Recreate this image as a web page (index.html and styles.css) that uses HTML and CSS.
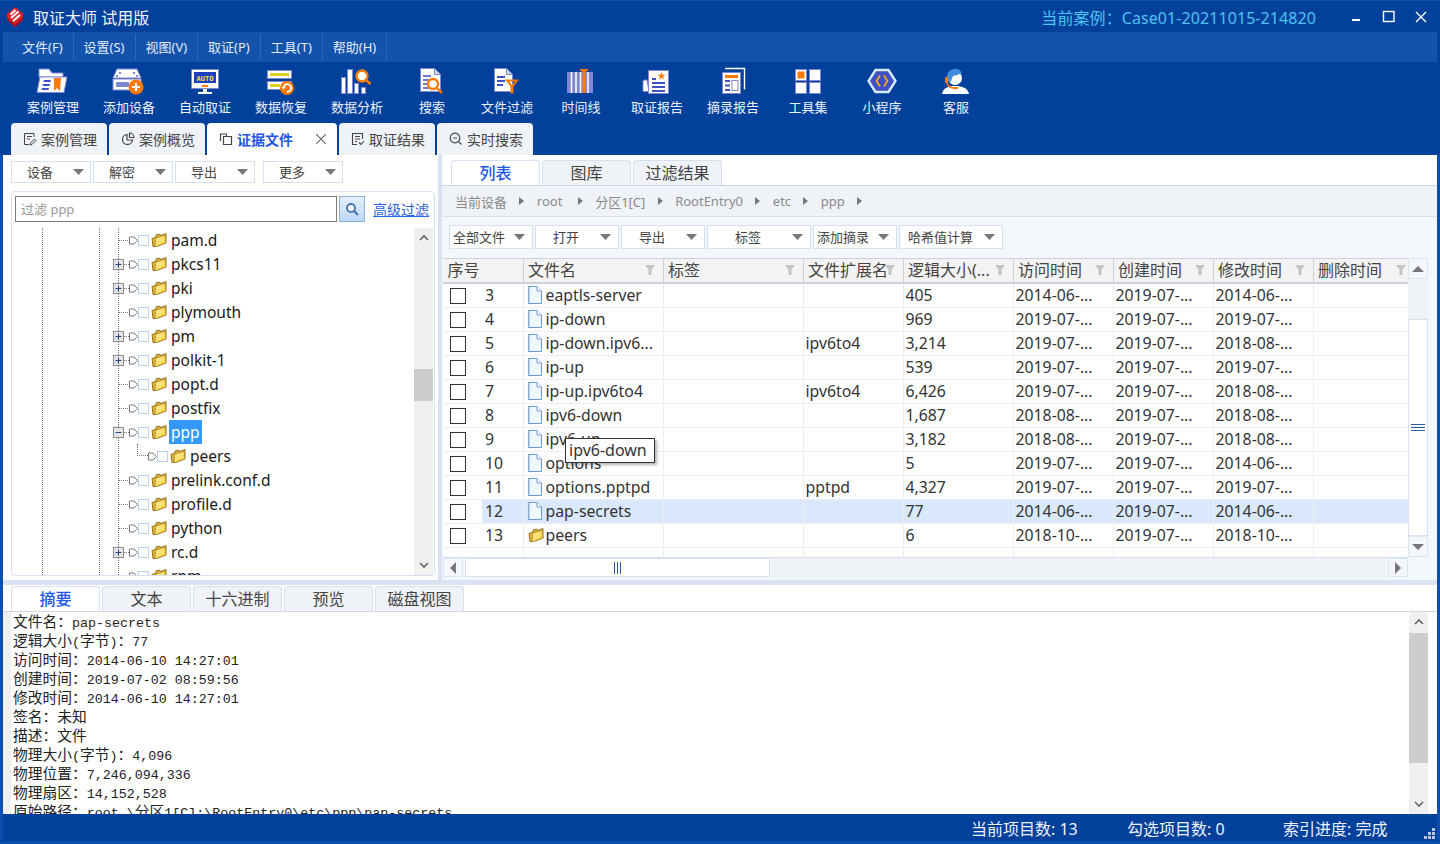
FILE: index.html
```html
<!DOCTYPE html>
<html lang="zh-CN">
<head>
<meta charset="utf-8">
<title>取证大师 试用版</title>
<link rel="stylesheet" href="styles.css">
</head>
<body>
<svg class="defs" width="0" height="0" aria-hidden="true">
  <defs>
    <linearGradient id="fold" x1="0" y1="0" x2="1" y2="1">
      <stop offset="0" stop-color="#fff3a0"/>
      <stop offset="1" stop-color="#f4cf3e"/>
    </linearGradient>
    <symbol id="folder" viewBox="0 0 16 16">
      <path d="M1 6.500l1 8h3.500l9.500-3.500V1.500l-5.500 2-1-1.500-3.500 1v2z" fill="#d9b24a" stroke="#9c7418"/>
      <path d="M4.500 6.500l9.500-3.500.8 7.800-9.300 3.700H4z" fill="url(#fold)" stroke="#b58a22" stroke-width=".8"/>
    </symbol>
    <symbol id="doc" viewBox="0 0 14 18">
      <path d="M.5.500h8.500l4.500 4.500v12.500H.5z" fill="#f1f7fe" stroke="#6f9ccf"/>
      <path d="M9 .5v4.500h4.500" fill="#fff" stroke="#6f9ccf"/>
      <path d="M1 1v16" stroke="#9ab8dc"/>
    </symbol>
    <symbol id="tag" viewBox="0 0 9 9">
      <path d="M.5 1h4.500l3.500 3.500-3.500 3.500h-4.500z" fill="#fff" stroke="#777"/>
    </symbol>
    <symbol id="funnel" viewBox="0 0 10 10">
      <path d="M0 0h10l-3.500 4.500v5.500h-3v-5.500z" fill="#c4c4c4"/>
    </symbol>
    <symbol id="caret" viewBox="0 0 11 6">
      <path d="M0 0h11l-5.500 6z" fill="#777"/>
    </symbol>
    <symbol id="plus" viewBox="0 0 11 11">
      <rect x=".5" y=".5" width="10" height="10" fill="#e4e4e4" stroke="#8a8a8a"/>
      <path d="M2.500 5.500h6M5.500 2.500v6" stroke="#23468f" fill="none"/>
    </symbol>
    <symbol id="minus" viewBox="0 0 11 11">
      <rect x=".5" y=".5" width="10" height="10" fill="#e4e4e4" stroke="#8a8a8a"/>
      <path d="M2.500 5.500h6" stroke="#23468f" fill="none"/>
    </symbol>
    <symbol id="chev-up" viewBox="0 0 10 6">
      <path d="M1 5l4-4 4 4" fill="none" stroke="#606060" stroke-width="1.600"/>
    </symbol>
    <symbol id="chev-down" viewBox="0 0 10 6">
      <path d="M1 1l4 4 4-4" fill="none" stroke="#606060" stroke-width="1.600"/>
    </symbol>
  </defs>
</svg>

<div class="app">
  <header class="chrome">
    <div class="titlebar">
      <svg class="logo" width="20" height="20" viewBox="0 0 20 20">
        <path d="M10 0l8 7v6l-8 7-8-7V7z" fill="#e0222d"/>
        <path d="M2 13l8 7 8-7v-3l-8 7-8-7z" fill="#a8141f"/>
        <path d="M5.500 7.500l5-4.500M6 11l7.500-6.500M8 14l7-6" stroke="#fff" stroke-width="2" fill="none"/>
      </svg>
      <span class="app-name">取证大师 试用版</span>
      <span class="case-name">当前案例：Case01-20211015-214820</span>
      <div class="win-buttons">
        <svg width="32" height="14" viewBox="0 0 32 14"><rect x="11" y="9" width="8" height="2" fill="#fff"/></svg>
        <svg width="32" height="14" viewBox="0 0 32 14"><rect x="10.500" y="1.500" width="10.500" height="10" fill="none" stroke="#fff" stroke-width="1.400"/></svg>
        <svg width="32" height="14" viewBox="0 0 32 14"><path d="M11 2l10 10M21 2l-10 10" stroke="#fff" stroke-width="1.400"/></svg>
      </div>
    </div>
    <nav class="menubar">
      <span class="menu-item">文件(F)</span>
      <span class="menu-item">设置(S)</span>
      <span class="menu-item">视图(V)</span>
      <span class="menu-item">取证(P)</span>
      <span class="menu-item">工具(T)</span>
      <span class="menu-item">帮助(H)</span>
    </nav>
    <div class="toolbar">
      <div class="tool">
        <svg width="36" height="28" viewBox="0 0 36 28">
          <path d="M4 2h10l3 4h11v4H4z" fill="#fff" stroke="#8088d0"/>
          <path d="M5 10h27l-3 15.500H2z" fill="#fff" stroke="#8088d0"/>
          <path d="M9 13h7l-.5 2h-7zM8 17h7l-.5 2h-7zM7 21h7l-.5 2h-7z" fill="#3f4fc4"/>
          <path d="M19 11h7l-1 13-3-3-3 3z" fill="#ff7a00"/>
        </svg>
        <span>案例管理</span>
      </div>
      <div class="tool">
        <svg width="36" height="28" viewBox="0 0 36 28">
          <path d="M6 2h20l4 9H2z" fill="#fff" stroke="#8088d0"/>
          <circle cx="9" cy="6" r="1" fill="#5a66c8"/><circle cx="23" cy="6" r="1" fill="#5a66c8"/>
          <circle cx="6" cy="9" r="1" fill="#5a66c8"/><circle cx="26" cy="9" r="1" fill="#5a66c8"/>
          <rect x="2" y="12" width="28" height="11" fill="#fff" stroke="#8088d0"/>
          <rect x="5" y="15" width="13" height="5" rx="1" fill="#7d86d2"/>
          <circle cx="25" cy="20" r="7.500" fill="#ff7a00"/>
          <path d="M25 16v8M21 20h8" stroke="#fff" stroke-width="2"/>
        </svg>
        <span>添加设备</span>
      </div>
      <div class="tool">
        <svg width="36" height="28" viewBox="0 0 36 28">
          <rect x="4.500" y="2.500" width="27" height="19" fill="#fff" stroke="#8088d0"/>
          <rect x="7" y="5" width="22" height="11" fill="#1d3fc4"/>
          <text class="auto-text" x="18" y="13.500">AUTO</text>
          <rect x="15" y="18" width="6" height="2" fill="#ff7a00"/>
          <rect x="16" y="22" width="4" height="3" fill="#fff"/>
          <rect x="11" y="25" width="14" height="2" fill="#fff"/>
        </svg>
        <span>自动取证</span>
      </div>
      <div class="tool">
        <svg width="36" height="28" viewBox="0 0 36 28">
          <rect x="4.500" y="3.500" width="24" height="8" fill="#fff" stroke="#8088d0"/>
          <rect x="7" y="6" width="19" height="3" fill="#e2cf23"/>
          <rect x="4.500" y="14.500" width="24" height="8" fill="#fff" stroke="#8088d0"/>
          <rect x="7" y="17" width="10" height="3" fill="#e2cf23"/>
          <circle cx="24" cy="21" r="7" fill="#ff7a00"/>
          <path d="M20.500 21a3.800 3.800 0 1 1 3.500 3.800" fill="none" stroke="#fff" stroke-width="1.800"/>
          <path d="M18.500 20h4l-2 2.500z" fill="#fff"/>
        </svg>
        <span>数据恢复</span>
      </div>
      <div class="tool">
        <svg width="36" height="28" viewBox="0 0 36 28">
          <rect x="2.500" y="10.500" width="4" height="16" fill="#fff" stroke="#8088d0"/>
          <rect x="8.500" y="2.500" width="5" height="24" fill="#fff" stroke="#8088d0"/>
          <rect x="15.500" y="16.500" width="4" height="10" fill="#fff" stroke="#8088d0"/>
          <rect x="22.500" y="20.500" width="4" height="6" fill="#fff" stroke="#8088d0"/>
          <circle cx="23" cy="9" r="5.500" fill="#fff" stroke="#ff7a00" stroke-width="2.400"/>
          <path d="M27 13l4.500 4" stroke="#ff7a00" stroke-width="2.400"/>
        </svg>
        <span>数据分析</span>
      </div>
      <div class="tool tool-m1">
        <svg width="36" height="28" viewBox="0 0 36 28">
          <path d="M6.500 1.500h14l6 6v17h-20z" fill="#fff" stroke="#8088d0"/>
          <path d="M20.500 1.500v6h6" fill="#cfd3ef" stroke="#8088d0"/>
          <path d="M9 9h8M9 13h6M9 17h4M9 21h6" stroke="#3f4fc4" stroke-width="1.600"/>
          <circle cx="19" cy="17" r="5" fill="#fff" stroke="#ff7a00" stroke-width="2.400"/>
          <path d="M23 21l5 5" stroke="#ff7a00" stroke-width="2.400"/>
        </svg>
        <span>搜索</span>
      </div>
      <div class="tool tool-m1">
        <svg width="36" height="28" viewBox="0 0 36 28">
          <path d="M5.500 1.500h12l6 6v17h-18z" fill="#fff" stroke="#8088d0"/>
          <path d="M17.500 1.500v6h6" fill="#cfd3ef" stroke="#8088d0"/>
          <path d="M8 10h8M8 14h8M8 18h6" stroke="#3f4fc4" stroke-width="1.800"/>
          <path d="M16 12.500h14l-5.500 7v7h-3v-7zM20 14.500l3 3.500 3-3.500z" fill="#ff7a00" fill-rule="evenodd"/>
        </svg>
        <span>文件过滤</span>
      </div>
      <div class="tool tool-m2">
        <svg width="36" height="28" viewBox="0 0 36 28">
          <rect x="4" y="5" width="26" height="21" fill="#8088d0"/>
          <path d="M8.500 5v21M13 5v21M17.500 5v21M25 5v21" stroke="#fff" stroke-width="1.500"/>
          <rect x="19.500" y="7" width="3" height="19" fill="#ff7a00"/>
          <path d="M16 2h10l-5 5z" fill="#ff7a00"/>
        </svg>
        <span>时间线</span>
      </div>
      <div class="tool">
        <svg width="36" height="28" viewBox="0 0 36 28">
          <path d="M8 13H5.500a1.500 1.500 0 0 0-1.500 1.500v10h6z" fill="#fff" stroke="#8088d0"/>
          <rect x="9.500" y="3.500" width="20" height="23" fill="#fff" stroke="#8088d0"/>
          <path d="M22.500 5l1 2.800h3l-2.400 1.800 1 3-2.600-1.800-2.500 1.800 1-3-2.400-1.800h3z" fill="#ff7a00"/>
          <path d="M13 12h4M13 16h13M13 20h13M13 24h13" stroke="#3f4fc4" stroke-width="1.800"/>
        </svg>
        <span>取证报告</span>
      </div>
      <div class="tool">
        <svg width="36" height="28" viewBox="0 0 36 28">
          <path d="M10 1.500h19.500v21" fill="none" stroke="#fff" stroke-width="1.400"/>
          <rect x="7.500" y="5.500" width="18" height="21" fill="#fff" stroke="#8088d0"/>
          <rect x="10" y="8" width="13" height="3" fill="#ff7a00"/>
          <path d="M10 14h5M10 18.500h5M10 23h5" stroke="#3f4fc4" stroke-width="1.800"/>
          <rect x="17" y="13.500" width="6" height="10" fill="#fff" stroke="#8088d0"/>
        </svg>
        <span>摘录报告</span>
      </div>
      <div class="tool tool-m1">
        <svg width="36" height="28" viewBox="0 0 36 28">
          <rect x="5.500" y="2.500" width="11" height="11" fill="#fff" stroke="#8088d0"/>
          <rect x="7.500" y="4.500" width="7" height="7" fill="#ff7a00"/>
          <rect x="19.500" y="2.500" width="11" height="11" fill="#fff" stroke="#8088d0"/>
          <rect x="5.500" y="15.500" width="11" height="11" fill="#fff" stroke="#8088d0"/>
          <rect x="19.500" y="15.500" width="11" height="11" fill="#fff" stroke="#8088d0"/>
        </svg>
        <span>工具集</span>
      </div>
      <div class="tool tool-m2">
        <svg width="36" height="28" viewBox="0 0 36 28">
          <path d="M11.500 3h13l7 11-7 11h-13l-7-11z" fill="#3f4fc4" stroke="#d5ecff" stroke-width="2.400"/>
          <path d="M16 8.500l-3.500 5.500 3.500 5.500M20 8.500l3.500 5.500-3.500 5.500" fill="none" stroke="#f2a51e" stroke-width="1.800"/>
        </svg>
        <span>小程序</span>
      </div>
      <div class="tool tool-m2">
        <svg width="36" height="28" viewBox="0 0 36 28">
          <path d="M4 27c1-6 6-8 13-8s13 2 14 8z" fill="#fff"/>
          <circle cx="17" cy="11" r="7" fill="#fff"/>
          <path d="M9 10a8 8 0 0 1 15-4l-5 2-4 1-2 5-1 2z" fill="#3f8fe0"/>
          <rect x="7" y="10" width="3" height="6" rx="1" fill="#ff7a00"/>
          <path d="M9 16c1 4 4 5 8 5" fill="none" stroke="#ff7a00" stroke-width="1.400"/>
          <rect x="15" y="20" width="5" height="2" fill="#ff7a00"/>
        </svg>
        <span>客服</span>
      </div>
    </div>
    <div class="tabs">
      <div class="tab">
        <svg class="tab-icon" width="14" height="14" viewBox="0 0 14 14"><path d="M11 5V1.500H1.500v11H6M4 4.500h5M4 7h3M9 12.500l-2 .5.500-2 4-4 1.500 1.500z" fill="none" stroke="#444"/></svg>
        <span>案例管理</span>
      </div>
      <div class="tab">
        <svg class="tab-icon" width="14" height="14" viewBox="0 0 14 14"><path d="M6 2.500a5 5 0 1 0 5.500 5.500H6zM8.500 1a4.500 4.500 0 0 1 4.500 4.500H8.500z" fill="none" stroke="#444" stroke-width="1.200"/></svg>
        <span>案例概览</span>
      </div>
      <div class="tab tab-active">
        <svg class="tab-icon" width="14" height="14" viewBox="0 0 14 14"><path d="M1.500 9V2h6v2M4.500 12.500v-8h8v8z" fill="none" stroke="#444" stroke-width="1.200"/></svg>
        <span>证据文件</span>
        <svg class="tab-close" width="10" height="10" viewBox="0 0 10 10"><path d="M0 0l10 10M10 0L0 10" stroke="#666" stroke-width="1.100"/></svg>
      </div>
      <div class="tab">
        <svg class="tab-icon" width="14" height="14" viewBox="0 0 14 14"><path d="M11.500 7V1.500h-10v11H6M4 4.500h5M4 7h5M4 9.500h2M8 10.500l2 2 3-3.500" fill="none" stroke="#444" stroke-width="1.100"/></svg>
        <span>取证结果</span>
      </div>
      <div class="tab">
        <svg class="tab-icon" width="14" height="14" viewBox="0 0 14 14"><circle cx="6" cy="6" r="4.800" fill="none" stroke="#444" stroke-width="1.200"/><path d="M4 6h4M9.500 9.500l3 3" stroke="#444" stroke-width="1.200"/></svg>
        <span>实时搜索</span>
      </div>
    </div>
  </header>

  <main class="workspace">
    <section class="left-pane">
      <div class="btn-row">
        <div class="drop drop-left"><span>设备</span><svg width="11" height="6"><use href="#caret"/></svg></div>
        <div class="drop drop-left"><span>解密</span><svg width="11" height="6"><use href="#caret"/></svg></div>
        <div class="drop drop-left"><span>导出</span><svg width="11" height="6"><use href="#caret"/></svg></div>
        <div class="drop drop-left drop-gap"><span>更多</span><svg width="11" height="6"><use href="#caret"/></svg></div>
      </div>
      <div class="tree-panel">
        <div class="filter-row">
          <div class="filter-input"><span>过滤 ppp</span></div>
          <div class="filter-btn">
            <svg width="14" height="14" viewBox="0 0 14 14"><circle cx="6" cy="6" r="4" fill="#fff" stroke="#4a78b0" stroke-width="2"/><path d="M9 9l4 4" stroke="#4a78b0" stroke-width="2.400"/></svg>
          </div>
          <a class="filter-link">高级过滤</a>
        </div>
        <div class="tree-body">
          <i class="guide guide-a"></i><i class="guide guide-b"></i><i class="guide guide-c"></i>
          <div class="tree-rows">
            <div class="node"><span class="exp"></span><i class="dots"></i><svg class="ico-tag" width="9" height="9"><use href="#tag"/></svg><i class="cb"></i><svg width="16" height="16"><use href="#folder"/></svg><span class="label">pam.d</span></div>
            <div class="node"><svg class="exp" width="11" height="11"><use href="#plus"/></svg><i class="dots"></i><svg class="ico-tag" width="9" height="9"><use href="#tag"/></svg><i class="cb"></i><svg width="16" height="16"><use href="#folder"/></svg><span class="label">pkcs11</span></div>
            <div class="node"><svg class="exp" width="11" height="11"><use href="#plus"/></svg><i class="dots"></i><svg class="ico-tag" width="9" height="9"><use href="#tag"/></svg><i class="cb"></i><svg width="16" height="16"><use href="#folder"/></svg><span class="label">pki</span></div>
            <div class="node"><span class="exp"></span><i class="dots"></i><svg class="ico-tag" width="9" height="9"><use href="#tag"/></svg><i class="cb"></i><svg width="16" height="16"><use href="#folder"/></svg><span class="label">plymouth</span></div>
            <div class="node"><svg class="exp" width="11" height="11"><use href="#plus"/></svg><i class="dots"></i><svg class="ico-tag" width="9" height="9"><use href="#tag"/></svg><i class="cb"></i><svg width="16" height="16"><use href="#folder"/></svg><span class="label">pm</span></div>
            <div class="node"><svg class="exp" width="11" height="11"><use href="#plus"/></svg><i class="dots"></i><svg class="ico-tag" width="9" height="9"><use href="#tag"/></svg><i class="cb"></i><svg width="16" height="16"><use href="#folder"/></svg><span class="label">polkit-1</span></div>
            <div class="node"><span class="exp"></span><i class="dots"></i><svg class="ico-tag" width="9" height="9"><use href="#tag"/></svg><i class="cb"></i><svg width="16" height="16"><use href="#folder"/></svg><span class="label">popt.d</span></div>
            <div class="node"><span class="exp"></span><i class="dots"></i><svg class="ico-tag" width="9" height="9"><use href="#tag"/></svg><i class="cb"></i><svg width="16" height="16"><use href="#folder"/></svg><span class="label">postfix</span></div>
            <div class="node"><svg class="exp" width="11" height="11"><use href="#minus"/></svg><i class="dots"></i><svg class="ico-tag" width="9" height="9"><use href="#tag"/></svg><i class="cb"></i><svg width="16" height="16"><use href="#folder"/></svg><span class="label label-selected">ppp</span></div>
            <div class="node node-child"><i class="elbow"></i><svg class="ico-tag" width="9" height="9"><use href="#tag"/></svg><i class="cb"></i><svg width="16" height="16"><use href="#folder"/></svg><span class="label">peers</span></div>
            <div class="node"><span class="exp"></span><i class="dots"></i><svg class="ico-tag" width="9" height="9"><use href="#tag"/></svg><i class="cb"></i><svg width="16" height="16"><use href="#folder"/></svg><span class="label">prelink.conf.d</span></div>
            <div class="node"><span class="exp"></span><i class="dots"></i><svg class="ico-tag" width="9" height="9"><use href="#tag"/></svg><i class="cb"></i><svg width="16" height="16"><use href="#folder"/></svg><span class="label">profile.d</span></div>
            <div class="node"><span class="exp"></span><i class="dots"></i><svg class="ico-tag" width="9" height="9"><use href="#tag"/></svg><i class="cb"></i><svg width="16" height="16"><use href="#folder"/></svg><span class="label">python</span></div>
            <div class="node"><svg class="exp" width="11" height="11"><use href="#plus"/></svg><i class="dots"></i><svg class="ico-tag" width="9" height="9"><use href="#tag"/></svg><i class="cb"></i><svg width="16" height="16"><use href="#folder"/></svg><span class="label">rc.d</span></div>
            <div class="node"><span class="exp"></span><i class="dots"></i><svg class="ico-tag" width="9" height="9"><use href="#tag"/></svg><i class="cb"></i><svg width="16" height="16"><use href="#folder"/></svg><span class="label">rpm</span></div>
          </div>
          <div class="sb sb-tree">
            <div class="sb-end"><svg width="10" height="6"><use href="#chev-up"/></svg></div>
            <div class="sb-track">
              <div class="sb-space sb-space-tree"></div>
              <div class="sb-thumb sb-thumb-tree"></div>
            </div>
            <div class="sb-end"><svg width="10" height="6"><use href="#chev-down"/></svg></div>
          </div>
        </div>
      </div>
    </section>
    <div class="v-split"></div>
    <section class="right-pane">
      <div class="subtabs">
        <div class="subtab subtab-active"><span>列表</span></div>
        <div class="subtab"><span>图库</span></div>
        <div class="subtab"><span>过滤结果</span></div>
      </div>
      <div class="crumbs">
        <span>当前设备</span><i class="tri"></i>
        <span class="crumb-root">root</span><i class="tri"></i>
        <span>分区1[C]</span><i class="tri"></i>
        <span>RootEntry0</span><i class="tri"></i>
        <span>etc</span><i class="tri"></i>
        <span>ppp</span><i class="tri"></i>
      </div>
      <div class="list-area">
        <div class="list-tools">
          <div class="drop drop-w84 drop-tight"><span>全部文件</span><svg width="11" height="6"><use href="#caret"/></svg></div>
          <div class="drop drop-w84"><span>打开</span><svg width="11" height="6"><use href="#caret"/></svg></div>
          <div class="drop drop-w84"><span>导出</span><svg width="11" height="6"><use href="#caret"/></svg></div>
          <div class="drop drop-w104"><span>标签</span><svg width="11" height="6"><use href="#caret"/></svg></div>
          <div class="drop drop-w84 drop-tight"><span>添加摘录</span><svg width="11" height="6"><use href="#caret"/></svg></div>
          <div class="drop drop-w104 drop-tight2"><span>哈希值计算</span><svg width="11" height="6"><use href="#caret"/></svg></div>
        </div>
        <div class="grid-wrap">
          <div class="grid-main">
            <div class="table-box">
              <table class="files">
                <colgroup>
                  <col class="c-seq"><col class="c-name"><col class="c-tag"><col class="c-ext"><col class="c-size"><col class="c-time"><col class="c-time"><col class="c-time"><col class="c-del">
                </colgroup>
                <thead>
                  <tr>
                    <th>序号</th>
                    <th>文件名<svg class="th-f" width="10" height="10"><use href="#funnel"/></svg></th>
                    <th>标签<svg class="th-f" width="10" height="10"><use href="#funnel"/></svg></th>
                    <th>文件扩展名<svg class="th-f" width="10" height="10"><use href="#funnel"/></svg></th>
                    <th>逻辑大小(...<svg class="th-f" width="10" height="10"><use href="#funnel"/></svg></th>
                    <th>访问时间<svg class="th-f" width="10" height="10"><use href="#funnel"/></svg></th>
                    <th>创建时间<svg class="th-f" width="10" height="10"><use href="#funnel"/></svg></th>
                    <th>修改时间<svg class="th-f" width="10" height="10"><use href="#funnel"/></svg></th>
                    <th>删除时间<svg class="th-f th-f-last" width="10" height="10"><use href="#funnel"/></svg></th>
                  </tr>
                </thead>
                <tbody>
                  <tr><td class="seq"><i class="check"></i><span class="num">3</span></td><td><div class="fname"><svg width="14" height="18"><use href="#doc"/></svg>eaptls-server</div></td><td></td><td></td><td>405</td><td>2014-06-...</td><td>2019-07-...</td><td>2014-06-...</td><td></td></tr>
                  <tr><td class="seq"><i class="check"></i><span class="num">4</span></td><td><div class="fname"><svg width="14" height="18"><use href="#doc"/></svg>ip-down</div></td><td></td><td></td><td>969</td><td>2019-07-...</td><td>2019-07-...</td><td>2019-07-...</td><td></td></tr>
                  <tr><td class="seq"><i class="check"></i><span class="num">5</span></td><td><div class="fname"><svg width="14" height="18"><use href="#doc"/></svg>ip-down.ipv6...</div></td><td></td><td>ipv6to4</td><td>3,214</td><td>2019-07-...</td><td>2019-07-...</td><td>2018-08-...</td><td></td></tr>
                  <tr><td class="seq"><i class="check"></i><span class="num">6</span></td><td><div class="fname"><svg width="14" height="18"><use href="#doc"/></svg>ip-up</div></td><td></td><td></td><td>539</td><td>2019-07-...</td><td>2019-07-...</td><td>2019-07-...</td><td></td></tr>
                  <tr><td class="seq"><i class="check"></i><span class="num">7</span></td><td><div class="fname"><svg width="14" height="18"><use href="#doc"/></svg>ip-up.ipv6to4</div></td><td></td><td>ipv6to4</td><td>6,426</td><td>2019-07-...</td><td>2019-07-...</td><td>2018-08-...</td><td></td></tr>
                  <tr><td class="seq"><i class="check"></i><span class="num">8</span></td><td><div class="fname"><svg width="14" height="18"><use href="#doc"/></svg>ipv6-down</div></td><td></td><td></td><td>1,687</td><td>2018-08-...</td><td>2019-07-...</td><td>2018-08-...</td><td></td></tr>
                  <tr><td class="seq"><i class="check"></i><span class="num">9</span></td><td><div class="fname"><svg width="14" height="18"><use href="#doc"/></svg>ipv6-up</div></td><td></td><td></td><td>3,182</td><td>2018-08-...</td><td>2019-07-...</td><td>2018-08-...</td><td></td></tr>
                  <tr><td class="seq"><i class="check"></i><span class="num">10</span></td><td><div class="fname"><svg width="14" height="18"><use href="#doc"/></svg>options</div></td><td></td><td></td><td>5</td><td>2019-07-...</td><td>2019-07-...</td><td>2014-06-...</td><td></td></tr>
                  <tr><td class="seq"><i class="check"></i><span class="num">11</span></td><td><div class="fname"><svg width="14" height="18"><use href="#doc"/></svg>options.pptpd</div></td><td></td><td>pptpd</td><td>4,327</td><td>2019-07-...</td><td>2019-07-...</td><td>2019-07-...</td><td></td></tr>
                  <tr class="row-selected"><td class="seq"><i class="check"></i><span class="num">12</span></td><td><div class="fname"><svg width="14" height="18"><use href="#doc"/></svg>pap-secrets</div></td><td></td><td></td><td>77</td><td>2014-06-...</td><td>2019-07-...</td><td>2014-06-...</td><td></td></tr>
                  <tr><td class="seq"><i class="check"></i><span class="num">13</span></td><td><div class="fname"><svg class="fname-folder" width="16" height="16"><use href="#folder"/></svg>peers</div></td><td></td><td></td><td>6</td><td>2018-10-...</td><td>2019-07-...</td><td>2018-10-...</td><td></td></tr>
                  <tr class="row-empty"><td></td><td></td><td></td><td></td><td></td><td></td><td></td><td></td><td></td></tr>
                </tbody>
              </table>
              <div class="tooltip">ipv6-down</div>
            </div>
            <div class="hscroll">
              <div class="hs-btn"><i class="tri-left"></i></div>
              <div class="hs-thumb"><i class="grip-v"></i></div>
              <div class="hs-track"></div>
              <div class="hs-btn"><i class="tri-right"></i></div>
            </div>
          </div>
          <div class="vscroll">
            <div class="vs-btn"><i class="tri-up"></i></div>
            <div class="vs-track"></div>
            <div class="vs-thumb"><i class="grip-h"></i></div>
            <div class="vs-btn"><i class="tri-down"></i></div>
          </div>
        </div>
      </div>
    </section>
  </main>

  <div class="h-split"></div>

  <section class="detail">
    <div class="detail-tabs">
      <div class="subtab subtab-active detail-tab"><span>摘要</span></div>
      <div class="subtab detail-tab"><span>文本</span></div>
      <div class="subtab detail-tab"><span>十六进制</span></div>
      <div class="subtab detail-tab"><span>预览</span></div>
      <div class="subtab detail-tab"><span>磁盘视图</span></div>
    </div>
    <div class="detail-body">
      <div class="detail-gutter"></div>
      <div class="detail-text">
        <div><b>文件名：</b>pap-secrets</div>
        <div><b>逻辑大小</b>(<b>字节</b>)<b>：</b>77</div>
        <div><b>访问时间：</b>2014-06-10 14:27:01</div>
        <div><b>创建时间：</b>2019-07-02 08:59:56</div>
        <div><b>修改时间：</b>2014-06-10 14:27:01</div>
        <div><b>签名：未知</b></div>
        <div><b>描述：文件</b></div>
        <div><b>物理大小</b>(<b>字节</b>)<b>：</b>4,096</div>
        <div><b>物理位置：</b>7,246,094,336</div>
        <div><b>物理扇区：</b>14,152,528</div>
        <div><b>原始路径：</b>root.\<b>分区</b>1[C]:\RootEntry0\etc\ppp\pap-secrets</div>
      </div>
      <div class="sb sb-detail">
        <div class="sb-end"><svg width="10" height="6"><use href="#chev-up"/></svg></div>
        <div class="sb-track">
          <div class="sb-thumb sb-thumb-detail"></div>
        </div>
        <div class="sb-end"><svg width="10" height="6"><use href="#chev-down"/></svg></div>
      </div>
    </div>
  </section>

  <footer class="status">
    <span class="stat">当前项目数: 13</span>
    <span class="stat">勾选项目数: 0</span>
    <span class="stat stat-last">索引进度: 完成</span>
    <svg class="size-grip" width="11" height="11" viewBox="0 0 11 11"><path d="M8 0h3v3H8zM4 4h3v3H4zM8 4h3v3H8zM0 8h3v3H0zM4 8h3v3H4zM8 8h3v3H8z" fill="#b9c6e2"/></svg>
  </footer>
</div>
</body>
</html>
```

FILE: styles.css
```css
* { box-sizing: border-box; }
html, body { margin: 0; padding: 0; }
body {
  width: 1440px;
  height: 844px;
  overflow: hidden;
  font-family: "Noto Sans", "Noto Sans CJK SC", sans-serif;
  color: #333;
  background: #0c4eae;
}
.defs { position: absolute; }
.app {
  width: 1440px;
  height: 844px;
  display: flex;
  flex-direction: column;
  background: #0c4eae;
  overflow: hidden;
}
.chrome {
  background: #01409b;
  border-top: 1px solid #0c4eae;
  flex: none;
}
.titlebar {
  height: 31px;
  display: flex;
  align-items: center;
  color: #fff;
  padding-left: 5px;
}
.logo { flex: none; margin-right: 8px; }
.app-name { font-size: 16px; color: #f0f4fb; }
.case-name {
  font-size: 16px;
  letter-spacing: .08px;
  color: #4fc3f2;
  margin-left: auto;
  margin-right: 25px;
}
.win-buttons { display: flex; margin-right: 3px; margin-top: 1px; }
.win-buttons svg { display: block; }
.menubar {
  height: 30px;
  margin: 0 3px;
  padding: 2px 0 2px 9px;
  background: #1353ac;
  display: flex;
  align-items: stretch;
}
.menu-item {
  font-size: 13px;
  color: #e4ebf8;
  padding: 0 10px 2px;
  display: flex;
  align-items: center;
  border-right: 1px solid #2e68b9;
}
.toolbar {
  height: 61px;
  padding-left: 15px;
  display: flex;
}
.tool {
  width: 76px;
  flex: none;
  display: flex;
  flex-direction: column;
  align-items: center;
  padding-top: 5px;
  font-size: 13px;
  color: #eef3fb;
  white-space: nowrap;
}
.tool-m1 { margin-left: -1px; }
.tool-m2 { margin-left: -2px; }
.tool svg { display: block; margin-bottom: 3px; }
.tool span { line-height: 18px; }
.auto-text {
  font-family: "DejaVu Sans Mono", monospace;
  font-size: 7px;
  font-weight: 700;
  fill: #ffe22a;
  text-anchor: middle;
}
.tabs {
  height: 32px;
  padding-left: 11px;
  display: flex;
  gap: 2px;
}
.tab {
  width: 96px;
  background: #eff2f7;
  border-radius: 4px 4px 0 0;
  display: flex;
  align-items: center;
  padding-left: 12px;
  font-size: 14px;
  color: #444;
}
.tab-icon { margin-right: 4px; flex: none; }
.tab-active {
  width: 130px;
  background: #fff;
  color: #2357e8;
  font-weight: 700;
  padding-left: 12px;
  border-radius: 4px 4px 0 0;
}
.tab-close { margin-left: 23px; }

.workspace {
  height: 425px;
  flex: none;
  margin: 0 3px;
  display: flex;
  background: #fff;
}
.left-pane {
  width: 435px;
  flex: none;
  padding: 6px 3px 4px 8px;
  display: flex;
  flex-direction: column;
}
.btn-row { display: flex; gap: 2px; margin-bottom: 8px; }
.drop {
  height: 22px;
  border: 1px solid #d7e0f0;
  background: #fff;
  display: flex;
  align-items: center;
  justify-content: space-between;
  font-size: 13px;
  color: #444;
  flex: none;
}
.drop span { padding-bottom: 2px; }
.drop svg { display: block; flex: none; }
.drop-left { width: 80px; padding: 0 6px 0 15px; }
.drop-gap { margin-left: 6px; }
.tree-panel {
  flex: 1;
  min-height: 0;
  border: 1px solid #d7e0f0;
  border-radius: 4px;
  display: flex;
  flex-direction: column;
  overflow: hidden;
}
.filter-row {
  height: 36px;
  flex: none;
  padding: 4px 0 6px 3px;
  display: flex;
  align-items: stretch;
}
.filter-input {
  width: 322px;
  border: 1px solid #7a7a7a;
  font-size: 13px;
  color: #999;
  padding-left: 5px;
  display: flex;
  align-items: center;
}
.filter-input span { padding-bottom: 2px; }
.filter-btn {
  width: 26px;
  margin-left: 2px;
  border: 1px solid #8fb2dd;
  background: linear-gradient(#e3effd, #bcd7f7);
  display: flex;
  align-items: center;
  justify-content: center;
}
.filter-link {
  font-size: 14px;
  color: #2b62e0;
  text-decoration: underline;
  margin-left: 8px;
  display: flex;
  align-items: center;
}
.tree-body {
  flex: 1;
  min-height: 0;
  position: relative;
  display: flex;
  overflow: hidden;
}
.tree-rows { flex: 1; min-width: 0; padding-left: 101px; }
.guide {
  position: absolute;
  top: 0;
  bottom: 0;
  width: 1px;
  background: repeating-linear-gradient(#777 0 1px, transparent 1px 2px);
}
.guide-a { left: 30px; }
.guide-b { left: 87px; }
.guide-c { left: 106px; }
.node {
  height: 24px;
  display: flex;
  align-items: center;
  position: relative;
  font-size: 15.5px;
  color: #1a1a1a;
  white-space: nowrap;
}
.node svg { flex: none; display: block; }
.exp { width: 11px; height: 11px; flex: none; position: relative; z-index: 1; }
.dots {
  width: 5px;
  height: 1px;
  flex: none;
  background: repeating-linear-gradient(90deg, #777 0 1px, transparent 1px 2px);
}
.node > span.exp + .dots { width: 10px; margin-left: -5px; }
.ico-tag { margin-right: 0; }
.cb {
  width: 11px;
  height: 11px;
  flex: none;
  border: 1px solid #bcd0f7;
  background: #fff;
  margin-right: 2px;
}
.label { padding: 0 2px; margin-left: 2px; line-height: 24px; height: 24px; }
.label-selected { background: #3399ff; color: #fff; }
.node-child { padding-left: 35px; }
.elbow {
  position: absolute;
  left: 24px;
  top: 0;
  width: 11px;
  height: 12px;
  border-left: 1px dotted #777;
  border-bottom: 1px dotted #777;
}

.sb {
  width: 19px;
  flex: none;
  background: #f0f0f0;
  display: flex;
  flex-direction: column;
}
.sb-tree { margin-right: 1px; }
.sb-end {
  height: 20px;
  flex: none;
  display: flex;
  align-items: center;
  justify-content: center;
}
.sb-end svg { display: block; }
.sb-track { flex: 1; min-height: 0; }
.sb-thumb { background: #cdcdcd; }
.sb-space-tree { height: 121px; }
.sb-thumb-tree { height: 32px; }
.sb-thumb-detail { height: 130px; margin-top: 1px; }

.v-split { width: 4px; flex: none; background: #d9e2f2; }
.right-pane {
  width: 995px;
  flex: none;
  display: flex;
  flex-direction: column;
  min-width: 0;
}
.subtabs {
  height: 31px;
  flex: none;
  padding: 5px 0 0 9px;
  display: flex;
  gap: 2px;
  border-bottom: 1px solid #ccd2e2;
}
.subtab {
  width: 89px;
  height: 25px;
  border: 1px solid #d7e0f0;
  border-bottom: 0;
  border-radius: 4px 4px 0 0;
  background: #eff2f7;
  font-size: 16px;
  color: #444;
  display: flex;
  align-items: center;
  justify-content: center;
}
.subtab span { padding-bottom: 2px; }
.subtab-active { background: #fff; color: #2357e8; font-weight: 500; }
.crumbs {
  height: 31px;
  flex: none;
  background: #eff2f7;
  border-bottom: 1px solid #d7e0f0;
  padding-left: 13px;
  display: flex;
  align-items: center;
  gap: 12.4px;
  font-size: 13px;
  color: #8a8a8a;
}
.crumb-root { margin-right: 3px; }
.tri {
  width: 0;
  height: 0;
  border-left: 5px solid #777;
  border-top: 4.500px solid transparent;
  border-bottom: 4.500px solid transparent;
  flex: none;
}
.list-area {
  flex: 1;
  min-height: 0;
  background: #f3f6fb;
  padding-top: 8px;
  display: flex;
  flex-direction: column;
}
.list-tools {
  height: 24px;
  flex: none;
  padding-left: 7px;
  display: flex;
  gap: 2px;
  margin-bottom: 9px;
}
.list-tools .drop { height: 24px; padding-right: 7px; }
.drop-w84 { width: 84px; padding-left: 17px; }
.drop-w104 { width: 104px; padding-left: 27px; }
.list-tools .drop-tight { padding-left: 3px; }
.list-tools .drop-tight2 { padding-left: 8px; }
.grid-wrap { display: flex; padding-left: 1px; }
.grid-main { width: 965px; flex: none; }
.table-box {
  height: 299px;
  position: relative;
  overflow: hidden;
  background: #fff;
}
.files {
  width: 965px;
  table-layout: fixed;
  border-collapse: collapse;
}
.c-seq { width: 80px; }
.c-name, .c-tag { width: 140px; }
.c-ext { width: 100px; }
.c-size { width: 110px; }
.c-time { width: 100px; }
.c-del { width: 95px; }
.files th {
  height: 24px;
  background: #f3f3f3;
  border: 1px solid #cdcfdd;
  border-width: 1px 1px 2px 0;
  font-size: 16px;
  line-height: 20px;
  font-weight: 400;
  color: #444;
  text-align: left;
  padding: 0 0 0 4.5px;
  position: relative;
  white-space: nowrap;
}
.th-f { position: absolute; right: 8px; top: 6px; }
.th-f-last { right: 2px; }
.files td {
  height: 24px;
  border-right: 1px solid #eeeeee;
  border-bottom: 1px solid #eeeeee;
  font-size: 15.8px;
  line-height: 20px;
  color: #333;
  padding: 0 0 0 2px;
  white-space: nowrap;
  overflow: hidden;
}
.files td.seq { padding: 0; }
.seq { position: relative; }
.check {
  position: absolute;
  left: 7px;
  top: 4px;
  width: 16px;
  height: 16px;
  border: 1px solid #333;
  background: #fff;
}
.num { display: block; padding-left: 42px; line-height: 23px; }
.fname { display: flex; align-items: center; gap: 4px; padding-left: 2px; }
.fname svg { flex: none; display: block; }
.fname .fname-folder { margin-right: -2px; }
.row-selected td { background: #d9e8fc; }
.row-selected td.seq { background: linear-gradient(90deg, #fff 39px, #d9e8fc 39px); }
.row-empty td { height: 24px; }
.tooltip {
  position: absolute;
  left: 122px;
  top: 180px;
  width: 90px;
  height: 25px;
  background: #fff;
  border: 1px solid #333;
  box-shadow: 2px 2px 3px rgba(0, 0, 0, .3);
  font-size: 16px;
  color: #333;
  padding-left: 3px;
  line-height: 22px;
}
.hscroll {
  height: 20px;
  display: flex;
  gap: 2px;
  border-top: 1px solid #d7e0f0;
}
.hs-btn {
  width: 20px;
  flex: none;
  background: #f3f6fb;
  border: 1px solid #dfe6f3;
  display: flex;
  align-items: center;
  justify-content: center;
}
.hs-thumb {
  width: 305px;
  flex: none;
  background: #fff;
  border: 1px solid #d7e0f0;
  display: flex;
  align-items: center;
  justify-content: center;
}
.hs-track { flex: 1; background: #eff2f7; }
.grip-v {
  width: 7px;
  height: 12px;
  border-left: 1px solid #2a5ca8;
  border-right: 1px solid #2a5ca8;
  background: linear-gradient(#2a5ca8, #2a5ca8) center / 1px 100% no-repeat;
}
.tri-left, .tri-right, .tri-up, .tri-down { width: 0; height: 0; display: block; }
.tri-left { border-right: 6px solid #777; border-top: 6px solid transparent; border-bottom: 6px solid transparent; }
.tri-right { border-left: 6px solid #777; border-top: 6px solid transparent; border-bottom: 6px solid transparent; }
.tri-up { border-bottom: 6px solid #777; border-left: 6px solid transparent; border-right: 6px solid transparent; }
.tri-down { border-top: 6px solid #777; border-left: 6px solid transparent; border-right: 6px solid transparent; }
.vscroll {
  width: 20px;
  flex: none;
  display: flex;
  flex-direction: column;
}
.vs-btn {
  height: 21px;
  flex: none;
  background: #f3f6fb;
  border: 1px solid #dfe6f3;
  display: flex;
  align-items: center;
  justify-content: center;
}
.vs-track { height: 40px; flex: none; background: #eff2f7; }
.vs-thumb {
  height: 217px;
  flex: none;
  background: #fff;
  border: 1px solid #d7e0f0;
  display: flex;
  align-items: center;
  justify-content: center;
}
.grip-h {
  width: 14px;
  height: 7px;
  border-top: 1px solid #2a5ca8;
  border-bottom: 1px solid #2a5ca8;
  background: linear-gradient(#2a5ca8, #2a5ca8) center / 100% 1px no-repeat;
}
.h-split { height: 5px; flex: none; margin: 0 3px; background: #dbe3f2; }
.detail {
  height: 229px;
  flex: none;
  margin: 0 3px;
  background: #fff;
  display: flex;
  flex-direction: column;
}
.detail-tabs {
  height: 27px;
  flex: none;
  padding: 1px 0 0 8px;
  display: flex;
  gap: 2px;
  border-bottom: 1px solid #d0d4e4;
}
.detail-tab { width: 89px; }
.detail-body { flex: 1; min-height: 0; display: flex; }
.detail-gutter { width: 8px; flex: none; background: #efefef; }
.detail-text {
  flex: 1;
  min-width: 0;
  margin-top: -1px;
  padding: 0 0 0 2px;
  overflow: hidden;
  font-family: "Liberation Mono", monospace;
  font-size: 13.33px;
  line-height: 19px;
  color: #222;
  white-space: nowrap;
}
.detail-text div { height: 19px; }
.detail-text b {
  font-family: "Noto Sans CJK SC", sans-serif;
  font-size: 14.75px;
  line-height: 19px;
  font-weight: 400;
}
.sb-detail { margin-right: 9px; }
.status {
  height: 27px;
  flex: none;
  margin: 0 3px;
  background: #01409b;
  display: flex;
  align-items: center;
  padding-left: 968px;
  font-size: 16px;
  color: #eef3fb;
  white-space: nowrap;
}
.stat { width: 156px; flex: none; }
.stat-last { width: 141px; }
.size-grip { display: block; flex: none; margin-top: 12px; }
```
